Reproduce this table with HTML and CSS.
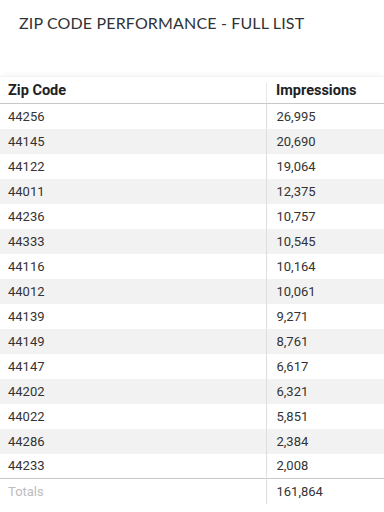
FILE: index.html
```html
<!DOCTYPE html>
<html>
<head>
<meta charset="utf-8">
<link rel="stylesheet" href="styles.css">
</head>
<body>
<div class="page">
  <h1 class="title">ZIP CODE PERFORMANCE - FULL LIST</h1>
  <div class="table-wrap">
    <table class="grid">
      <thead>
        <tr><th class="c1"><span>Zip Code</span></th><th class="c2"><span>Impressions</span></th></tr>
      </thead>
      <tbody>
        <tr><td>44256</td><td>26,995</td></tr>
        <tr><td>44145</td><td>20,690</td></tr>
        <tr><td>44122</td><td>19,064</td></tr>
        <tr><td>44011</td><td>12,375</td></tr>
        <tr><td>44236</td><td>10,757</td></tr>
        <tr><td>44333</td><td>10,545</td></tr>
        <tr><td>44116</td><td>10,164</td></tr>
        <tr><td>44012</td><td>10,061</td></tr>
        <tr><td>44139</td><td>9,271</td></tr>
        <tr><td>44149</td><td>8,761</td></tr>
        <tr><td>44147</td><td>6,617</td></tr>
        <tr><td>44202</td><td>6,321</td></tr>
        <tr><td>44022</td><td>5,851</td></tr>
        <tr><td>44286</td><td>2,384</td></tr>
        <tr><td>44233</td><td>2,008</td></tr>
      </tbody>
      <tfoot>
        <tr><td class="totals-label">Totals</td><td>161,864</td></tr>
      </tfoot>
    </table>
  </div>
</div>
</body>
</html>
```
FILE: styles.css
```css
html, body {
  margin: 0;
  padding: 0;
  background: #fff;
}
.page {
  width: 384px;
  height: 512px;
  overflow: hidden;
  font-family: Roboto, "Liberation Sans", sans-serif;
}
.title {
  margin: 0;
  padding: 13px 0 0 19px;
  height: 62px;
  box-sizing: border-box;
  font-family: Lato, "Open Sans", sans-serif;
  font-weight: 400;
  font-size: 16px;
  letter-spacing: 0.15px;
  color: #2f3337;
}
.table-wrap {
  margin-top: 14px;
  border-top: 1px solid #f3f3f3;
  box-shadow: 0 -4px 6px -3px rgba(0,0,0,0.05);
}
.grid {
  width: 100%;
  border-collapse: collapse;
  table-layout: fixed;
}
.grid th {
  height: 26px;
  padding: 0 0 0 8px;
  text-align: left;
  font-size: 14.5px;
  font-weight: 700;
  color: #212121;
  border-bottom: 1px solid #c8c8c8;
  position: relative;
}
.grid th.c1 { width: 258px; }
.grid th.c2 { padding-left: 10px; }
.grid th.c2::before {
  content: "";
  position: absolute;
  left: 0;
  top: 6px;
  bottom: 0;
  border-left: 1px solid #e6e6e6;
}
.grid td {
  height: 25px;
  padding: 0 0 0 8px;
  font-size: 13px;
  color: #333;
  box-sizing: border-box;
}
.grid td + td {
  padding-left: 10px;
  border-left: 1px solid #dedede;
}
.grid tbody tr:nth-child(even) td {
  background: #f2f2f2;
}
.grid tfoot td {
  border-top: 1px solid #c8c8c8;
}
.grid tfoot td.totals-label {
  color: #bdbdbd;
}
```
